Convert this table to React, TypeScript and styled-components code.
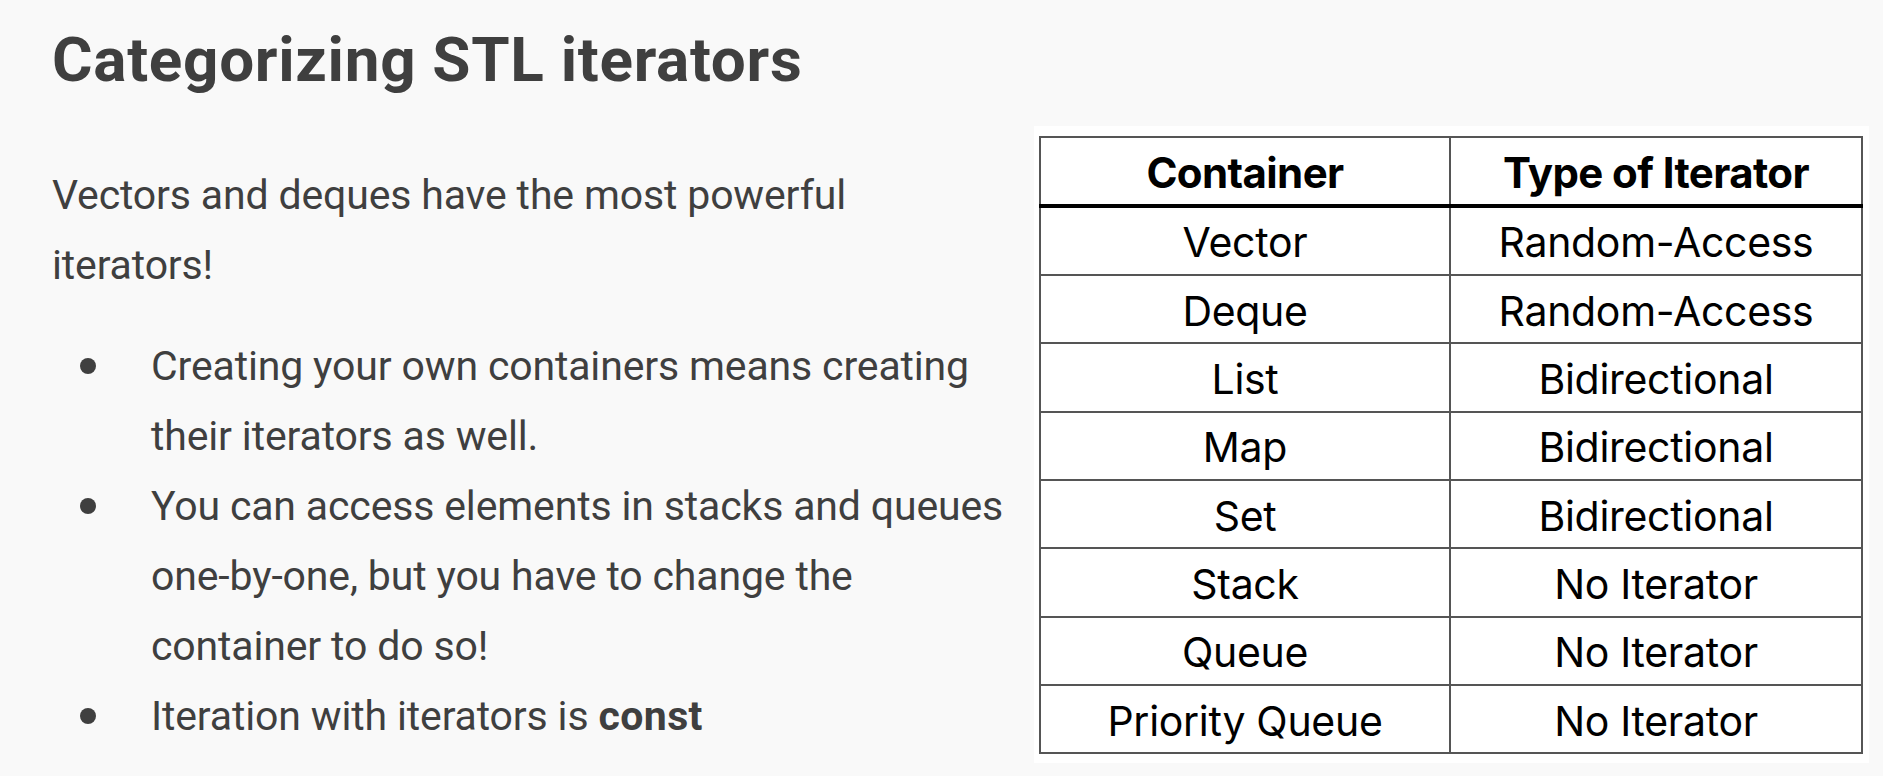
import React from "react";
import styled, { createGlobalStyle } from "styled-components";

const Global = createGlobalStyle`
  html, body { margin: 0; padding: 0; background: #f9f9f9; }
  body { width: 1883px; height: 776px; overflow: hidden; }
`;

const Slide = styled.div`
  display: grid;
  grid-template-columns: 1fr 835px;
  width: 1883px;
  height: 776px;
  box-sizing: border-box;
  padding-right: 14px;
  background: #f9f9f9;
  color: #3f3f3f;
  font-family: Roboto, "Open Sans", sans-serif;
`;

const TextColumn = styled.div`
  display: flex;
  flex-direction: column;
  padding-left: 52px;
  padding-top: 25px;
`;

const Title = styled.h1`
  margin: 0;
  font-size: 62px;
  line-height: 70px;
  font-weight: 700;
  letter-spacing: 0.7px;
  white-space: nowrap;
`;

const Para = styled.p`
  margin: 65px 0 0;
  font-size: 41px;
  line-height: 70px;
  letter-spacing: -0.15px;
  white-space: nowrap;
`;

const List = styled.ul`
  list-style: none;
  margin: 31px 0 0;
  padding: 0;
`;

const Item = styled.li`
  display: grid;
  grid-template-columns: 99px 1fr;
  font-size: 41px;
  line-height: 70px;
  letter-spacing: -0.15px;
  white-space: nowrap;
`;

const Dot = styled.span`
  display: flex;
  align-items: center;
  height: 70px;
  padding-left: 28px;
  &::before {
    content: "";
    width: 16px;
    height: 16px;
    border-radius: 50%;
    background: #3f3f3f;
  }
`;

const Strong = styled.b`
  font-weight: 700;
  letter-spacing: 0.4px;
`;

const TableBox = styled.div`
  align-self: start;
  margin-top: 126px;
  background: #fff;
  padding: 10px 8px 9px 5px;
`;

const Table = styled.table`
  width: 822px;
  border-collapse: collapse;
  table-layout: fixed;
  font-family: Inter, "Noto Sans", sans-serif;
  color: #000;
  border: 2px solid #444;
`;

const Th = styled.th`
  height: 62.5px;
  padding: 3px 0 0;
  font-size: 42px;
  font-weight: 700;
  letter-spacing: -0.6px;
  text-align: center;
  border: 2px solid #555;
  border-bottom: 4px solid #000;
`;

const Td = styled.td`
  height: 63.35px;
  padding: 3px 0 0;
  font-size: 41px;
  font-weight: 400;
  letter-spacing: -0.3px;
  text-align: center;
  border: 2px solid #555;
`;

const rows: [string, string][] = [
  ["Vector", "Random-Access"],
  ["Deque", "Random-Access"],
  ["List", "Bidirectional"],
  ["Map", "Bidirectional"],
  ["Set", "Bidirectional"],
  ["Stack", "No Iterator"],
  ["Queue", "No Iterator"],
  ["Priority Queue", "No Iterator"],
];

export default function App() {
  return (
    <>
      <Global />
      <Slide>
        <TextColumn>
          <Title>Categorizing STL iterators</Title>
          <Para>
            Vectors and deques have the most powerful
            <br />
            iterators!
          </Para>
          <List>
            <Item>
              <Dot />
              <span>
                Creating your own containers means creating
                <br />
                their iterators as well.
              </span>
            </Item>
            <Item>
              <Dot />
              <span>
                You can access elements in stacks and queues
                <br />
                one-by-one, but you have to change the
                <br />
                container to do so!
              </span>
            </Item>
            <Item>
              <Dot />
              <span>
                Iteration with iterators is <Strong>const</Strong>
              </span>
            </Item>
          </List>
        </TextColumn>
        <TableBox>
          <Table>
            <colgroup>
              <col style={{ width: "410px" }} />
              <col style={{ width: "412px" }} />
            </colgroup>
            <thead>
              <tr>
                <Th>Container</Th>
                <Th>Type of Iterator</Th>
              </tr>
            </thead>
            <tbody>
              {rows.map(([c, t]) => (
                <tr key={c}>
                  <Td>{c}</Td>
                  <Td>{t}</Td>
                </tr>
              ))}
            </tbody>
          </Table>
        </TableBox>
      </Slide>
    </>
  );
}
